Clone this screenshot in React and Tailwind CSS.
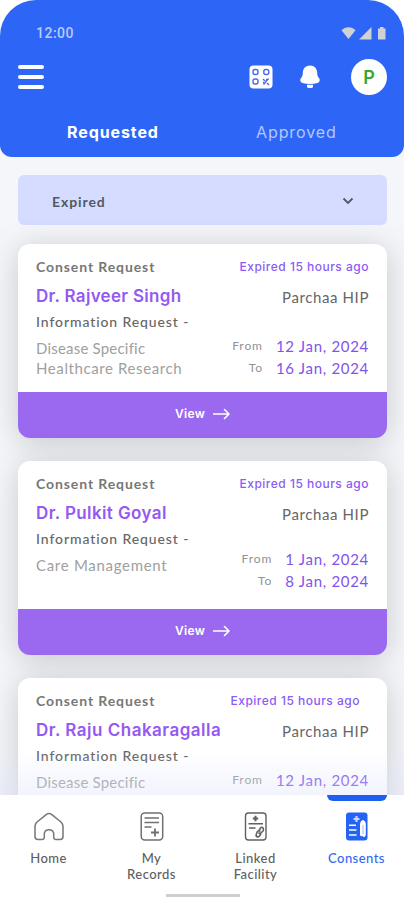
// src/pages/Consents/ConsentRequests.jsx
const requests = [
  {
    id: 1,
    doctor: "Dr. Rajveer Singh",
    nameClass: "tracking-[0.3px]",
    purpose: [
      { text: "Disease Specific", className: "tracking-[0.2px]" },
      { text: "Healthcare Research", className: "tracking-[0.6px]" },
    ],
    dates: [
      { label: "From", value: "12 Jan, 2024" },
      { label: "To", value: "16 Jan, 2024" },
    ],
    expiredClass: "",
    datesClass: "mt-[3px]",
    action: "View",
  },
  {
    id: 2,
    doctor: "Dr. Pulkit Goyal",
    nameClass: "tracking-[0.4px]",
    purpose: [{ text: "Care Management", className: "tracking-[0.7px]" }],
    dates: [
      { label: "From", value: "1 Jan, 2024" },
      { label: "To", value: "8 Jan, 2024" },
    ],
    expiredClass: "",
    datesClass: "-mt-px",
    action: "View",
  },
  {
    id: 3,
    doctor: "Dr. Raju Chakaragalla",
    nameClass: "tracking-[0.5px]",
    purpose: [{ text: "Disease Specific", className: "tracking-[0.2px]" }],
    dates: [{ label: "From", value: "12 Jan, 2024" }],
    expiredClass: "mr-[9px]",
    datesClass: "mt-[3px]",
  },
];

const StatusIcons = () => (
  <svg width="46" height="15" viewBox="0 0 46 15" fill="#d0d1d4">
    <path d="M0.5 4.2C4.5 0.3 10.5 0.3 14.5 4.2L7.5 13Z" />
    <path d="M18 13.5L30.5 1V13.5Z" />
    <path d="M37 2.5H39V1H42.500V2.5H44.500V13.500H37Z" />
  </svg>
);

const QrIcon = () => (
  <svg width="24" height="24" viewBox="0 0 24 24" fill="none">
    <rect x="0.5" y="0.5" width="23" height="23" rx="4" fill="#fff" />
    <g stroke="#4a6ae8" strokeWidth="1.4">
      <rect x="4" y="4.500" width="5" height="5" rx="2" />
      <rect x="14.800" y="4.500" width="5" height="5" rx="2" />
      <rect x="4" y="14" width="5" height="5" rx="2" />
      <path d="M14 14l2 2M19.500 13.500L14.500 19.500M18 18l2 2M17 14.500h1M14 17.500h1" />
    </g>
  </svg>
);

const BellIcon = () => (
  <svg width="20" height="24" viewBox="0 0 20 24" fill="#fff">
    <path d="M10 0.500C5.700 0.500 2.800 3.700 2.800 7.800C2.800 11 1.900 12 0.700 13.600C-0.300 15.200 0.500 17.500 2.500 18C7 19.200 13 19.200 17.500 18C19.500 17.500 20.300 15.200 19.300 13.600C18.100 12 17.200 11 17.200 7.800C17.200 3.700 14.300 0.500 10 0.500Z" />
    <path d="M7 19.800H13V21.500C13 22.500 12 23 10 23S7 22.500 7 21.500Z" />
  </svg>
);

const HomeIcon = () => (
  <svg width="30" height="30" viewBox="0 0 30 30" fill="none" stroke="#777" strokeWidth="1.5">
    <path
      d="M12.500 2.300Q15 0.500 17.500 2.300L27 10Q29 12 29 14.500V24.500Q29 27.500 26 27.500H22Q20 27.500 19.700 25.500V21.500Q19 17.800 15 17.800T10.300 21.500V25.500Q10 27.500 8 27.500H4Q1 27.500 1 24.500V14.500Q1 12 3 10Z"
      strokeLinejoin="round"
    />
  </svg>
);

const RecordsIcon = () => (
  <svg width="24" height="30" viewBox="0 0 24 30" fill="none" stroke="#707070" strokeWidth="1.5">
    <rect x="1.200" y="1" width="21.500" height="27" rx="3.500" />
    <path d="M4.500 6H19M4.500 10.500H19M4.500 15H11.500" />
    <path d="M15 16.500V24.500M11 20.500H19" strokeWidth="1.800" />
  </svg>
);

const FacilityIcon = () => (
  <svg width="24" height="30" viewBox="0 0 24 30" fill="none" stroke="#606060" strokeWidth="1.4">
    <rect x="1.500" y="1" width="20.500" height="27" rx="3" />
    <path d="M11.500 3.800V9.200M8.800 6.500H14.200" strokeWidth="2" />
    <path d="M4.500 11.800H19M5 16H11.500" />
    <path
      d="M15 18.500l1.500-2.500q1.500-1.500 2.500 0t0 3l-2 2q-1.500 1-2.500-.5M16.500 19.500q-1.500-1.500-3 0l-1 2q-1 2 .3 3t2.700-.5l1.500-2.500"
      strokeWidth="1.600"
    />
  </svg>
);

const ConsentsIcon = () => (
  <svg width="24" height="30" viewBox="0 0 24 30" fill="none" stroke="#fff">
    <rect x="1" y="0.500" width="21.500" height="28" rx="3" fill="#2463f4" stroke="none" />
    <path d="M11.500 4V10M8.500 7H14.500" stroke="#c6d6ff" strokeWidth="2.200" />
    <path d="M4 13.200H11M4 18H11.500M4 23H11.500" strokeWidth="1.500" />
    <path d="M15 23V12Q15.500 8.500 18 8Q20.800 9 20.800 12V23Q20.500 25 18.500 25.200L18 24Q15.500 25 15 23Z" fill="#fff" stroke="none" />
    <path d="M18 13V22" stroke="#9bb8ff" strokeWidth="1" />
  </svg>
);

const tabs = [
  { label: ["Home"], Icon: HomeIcon, width: "w-[97px]" },
  { label: ["My", "Records"], Icon: RecordsIcon, width: "w-[109px]" },
  { label: ["Linked", "Facility"], Icon: FacilityIcon, width: "w-[99px]" },
  { label: ["Consents"], Icon: ConsentsIcon, width: "w-[103px]", active: true },
];

const RequestCard = ({ request }) => (
  <div className="flex h-[194px] shrink-0 flex-col overflow-hidden rounded-[12px] bg-white shadow-[0_4px_30px_rgba(95,100,95,0.3)]">
    <div className="flex-1 px-[18px] pt-[11px]">
      <div className="flex h-[22px] items-center justify-between">
        <span className="text-[14px] font-bold tracking-[0.9px] text-[#777]">Consent Request</span>
        <span
          className={`pt-0.5 font-['Inter',sans-serif] text-[12px] font-medium tracking-[0.5px] text-[#8b5cf6] ${request.expiredClass}`}
        >
          Expired 15 hours ago
        </span>
      </div>
      <div className="mt-[9px] flex h-[22px] items-center justify-between">
        <span className={`font-['Inter',sans-serif] text-[17px] font-semibold text-[#9459f2] ${request.nameClass}`}>
          {request.doctor}
        </span>
        <span className="text-[15px] tracking-[0.6px] text-[#666]">Parchaa HIP</span>
      </div>
      <div className="mt-1 h-5 text-[14px] leading-5 font-medium tracking-[0.9px] text-[#666]">
        Information Request -
      </div>
      <div className="flex justify-between">
        <div className="mt-1.5 text-[15px] leading-5 text-[#a0a0a0]">
          {request.purpose.map((line) => (
            <p key={line.text} className={line.className}>
              {line.text}
            </p>
          ))}
        </div>
        <div className={`flex flex-col text-right leading-[22px] ${request.datesClass}`}>
          {request.dates.map((date) => (
            <div key={date.label} className="flex items-center justify-end gap-[13px]">
              <span className="text-[12px] tracking-[0.9px] text-[#929292]">{date.label}</span>
              <span className="text-[15px] tracking-[0.7px] text-[#8353ed]">{date.value}</span>
            </div>
          ))}
        </div>
      </div>
    </div>
    {request.action && (
      <button className="flex h-[46px] items-center justify-center gap-2 bg-[#9b68f0] pb-0.5 font-['Inter',sans-serif] text-[12px] font-semibold tracking-[0.3px] text-white">
        {request.action}
        <svg width="17" height="12" viewBox="0 0 17 12" fill="none" stroke="#fff" strokeWidth="1.600">
          <path d="M0.500 6H16M11.500 1.500L16 6L11.500 10.500" strokeLinecap="round" strokeLinejoin="round" />
        </svg>
      </button>
    )}
  </div>
);

export default function App() {
  return (
    <div className="flex h-[900px] w-[404px] flex-col overflow-hidden bg-white font-['Lato',sans-serif]">
      {/* Header */}
      <div className="bg-linear-to-b from-white from-50% to-[#f4f6fc] to-50%">
        <header className="h-[157px] rounded-t-[36px] rounded-b-[12px] bg-[#2d66f6] pt-[25px]">
          <div className="flex h-[17px] items-center justify-between pr-[17px] pl-9">
            <span className="font-['Roboto',sans-serif] text-[14px] font-medium tracking-[0.5px] text-[#b9cafb]">
              12:00
            </span>
            <StatusIcons />
          </div>
          <div className="mt-[17px] flex h-9 items-center pr-[17px] pl-[18px]">
            <div className="flex w-[26px] flex-col gap-[6px]">
              <span className="h-1 rounded-sm bg-white" />
              <span className="h-1 rounded-sm bg-white" />
              <span className="h-1 rounded-sm bg-white" />
            </div>
            <div className="ml-auto flex items-center">
              <QrIcon />
              <div className="ml-[27px]">
                <BellIcon />
              </div>
              <div className="ml-[31px] flex size-9 items-center justify-center rounded-full bg-white font-['Inter',sans-serif] text-[18px] font-semibold text-[#35a936]">
                P
              </div>
            </div>
          </div>
          <div className="mt-6 flex h-[26px] items-center font-['Inter',sans-serif] text-[16px]">
            <span className="ml-[67px] w-[93px] font-bold tracking-[0.9px] text-white">Requested</span>
            <span className="ml-24 tracking-[0.9px] text-[#b4c8ff]">Approved</span>
          </div>
        </header>
      </div>

      {/* Requests */}
      <main className="relative flex h-[638px] flex-col gap-[23px] overflow-hidden bg-[#f4f6fa] pt-[18px] pr-[17px] pl-[18px]">
        <div className="-mb-1 flex h-[50px] shrink-0 items-center justify-between rounded-md bg-[#d5dcff] pt-0.5 pr-[33px] pl-[34px] text-[14px] font-bold tracking-[0.9px] text-[#505968]">
          Expired
          <svg width="12" height="8" viewBox="0 0 12 8" fill="none" stroke="#505968" strokeWidth="1.800">
            <path d="M1.500 1.500L6 6L10.500 1.500" />
          </svg>
        </div>
        {requests.map((request) => (
          <RequestCard key={request.id} request={request} />
        ))}
        <div className="pointer-events-none absolute inset-x-0 bottom-0 h-11 bg-linear-to-b from-[#dfe4fb]/0 to-[#dfe4fb]/40" />
      </main>

      {/* Bottom navigation */}
      <nav className="flex h-[105px] flex-col bg-white">
        <div className="flex flex-1">
          {tabs.map(({ label, Icon, width, active }) => (
            <div
              key={label[0]}
              className={`flex shrink-0 flex-col items-center text-[13px] leading-4 font-medium tracking-[0.45px] ${width} ${
                active ? "text-[#3468f3]" : "text-[#606060]"
              }`}
            >
              <span className={`mb-[11px] h-1.5 w-[60px] rounded-b-md ${active ? "bg-[#1f5ff0]" : ""}`} />
              <Icon />
              <div className="mt-2 text-center">
                {label.map((line) => (
                  <p key={line}>{line}</p>
                ))}
              </div>
            </div>
          ))}
        </div>
        <div className="mb-[3px] ml-[166px] h-[3px] w-[74px] bg-[#cfcfcf]" />
      </nav>
    </div>
  );
}
